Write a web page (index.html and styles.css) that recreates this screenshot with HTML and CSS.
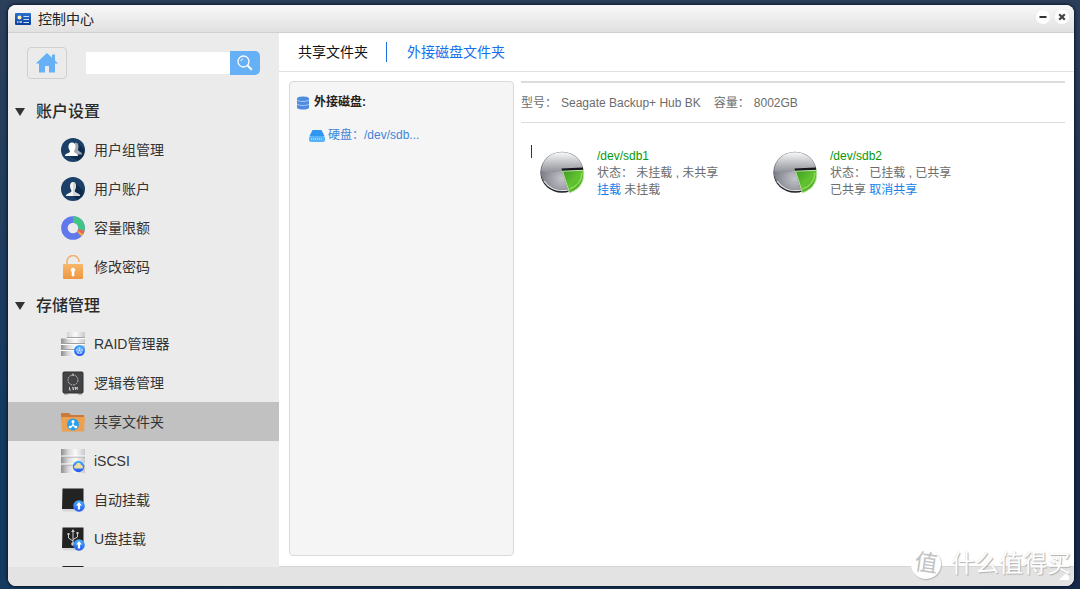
FILE: index.html
```html
<!DOCTYPE html>
<html lang="zh-CN">
<head>
<meta charset="utf-8">
<meta name="viewport" content="width=device-width, initial-scale=1">
<title>控制中心</title>
<link rel="stylesheet" href="styles.css">
</head>
<body>
<svg class="defs" aria-hidden="true">
  <defs>
    <linearGradient id="metal" x1="0" x2="1" y1="0" y2="0"><stop offset="0" stop-color="#8d8d8f"/><stop offset=".3" stop-color="#d9d9db"/><stop offset=".6" stop-color="#fafafa"/><stop offset="1" stop-color="#c9c9cb"/></linearGradient>
    <linearGradient id="blue" x1="0" x2="0" y1="0" y2="1"><stop offset="0" stop-color="#45b0fb"/><stop offset="1" stop-color="#2458f0"/></linearGradient>
    <linearGradient id="lock" x1="0" x2="0" y1="0" y2="1"><stop offset="0" stop-color="#f7b768"/><stop offset="1" stop-color="#ef9640"/></linearGradient>
    <linearGradient id="card" x1="0" x2="0" y1="0" y2="1"><stop offset="0" stop-color="#2c70cf"/><stop offset="1" stop-color="#0b3d9a"/></linearGradient>
    <linearGradient id="pie-top" x1="0" x2="0" y1="0" y2="1"><stop offset="0" stop-color="#fafafb"/><stop offset=".5" stop-color="#c3c4c8"/><stop offset="1" stop-color="#8f9198"/></linearGradient>
    <radialGradient id="pie-base" cx=".5" cy=".7" r=".55"><stop offset="0" stop-color="#c4c5cb"/><stop offset="1" stop-color="#777983"/></radialGradient>
    <linearGradient id="pie-green" x1="0" x2="1" y1="0" y2="1"><stop offset="0" stop-color="#3d9a20"/><stop offset=".5" stop-color="#62c331"/><stop offset="1" stop-color="#3f9f1b"/></linearGradient>
    <symbol id="up-badge" viewBox="0 0 12 12"><circle cx="6" cy="6" r="5.8" fill="url(#blue)"/><path d="M6 2 9 5.500H7.100V9.600H4.900V5.500H3z" fill="#fff"/></symbol>
    <symbol id="disk-pie" viewBox="0 0 46 44">
      <ellipse cx="22" cy="22" rx="21.500" ry="19.800" fill="#24252b"/>
      <ellipse cx="22" cy="20.500" rx="21.500" ry="19.800" fill="#777980"/>
      <ellipse cx="22" cy="20" rx="20.600" ry="18.800" fill="url(#pie-base)"/>
      <path d="M1.500 20C2 8 11 1.200 22 1.200S41 8 42.500 17L22 19.500Q11 23 1.500 20z" fill="url(#pie-top)"/>
      <path d="M4 30Q11 39.500 22 39.500 26 39.500 28 39" fill="none" stroke="#e4e5e8" stroke-width="1.200"/>
      <path d="M22 18 28 38" stroke="#5f6169"/>
      <path d="M21.500 17.500 43 16.500V19.500L22.500 20.500z" fill="#15161b"/>
      <path d="M22.500 20.200 43.500 19.300C44.500 29 42 37 29.500 42z" fill="url(#pie-green)" stroke="#bfe6a8"/>
      <path d="M29.500 38Q41 34 42 22" fill="none" stroke="#8fdb58" stroke-width="1.500"/>
    </symbol>
  </defs>
</svg>

<div class="window">
  <header class="titlebar">
    <svg class="title-icon" viewBox="0 0 16 12"><rect width="16" height="12" rx="1" fill="url(#card)"/><circle cx="4.500" cy="4.500" r="2" fill="#fff4b0"/><path d="M2 9h1.500M4.500 9H7" stroke="#cfe1fb" stroke-width="1.500"/><path d="M8.500 3.500H14M8.500 6.500H14M8.500 9.500H14" stroke="#c9dcf8"/></svg>
    <h1 class="title">控制中心</h1>
    <div class="window-actions">
      <button class="round" type="button" aria-label="最小化"><svg viewBox="0 0 14 14"><path d="M3.500 7h7" stroke="#333" stroke-width="2"/></svg></button>
      <button class="round" type="button" aria-label="关闭"><svg viewBox="0 0 14 14"><path d="m4.200 4.200 5.600 5.600m0-5.600L4.200 9.800" stroke="#444" stroke-width="2.200"/></svg></button>
    </div>
  </header>

  <div class="body">
    <aside class="sidebar">
      <form class="tools">
        <button class="home" type="button" aria-label="主页"><svg viewBox="0 0 24 22"><path d="M12 1 .8 11.600H4V20.500h6V14h4v6.500h6v-8.900h3.200L20 8.500V2.500h-3V5.800z" fill="#66b0f5"/></svg></button>
        <div class="search">
          <input class="search-box" type="text" aria-label="搜索">
          <button class="search-button" type="submit" aria-label="搜索"><svg viewBox="0 0 18 18" fill="none" stroke="#fff"><circle cx="7.500" cy="7.500" r="5.500" stroke-width="1.300"/><path d="M4.800 7A3 3 0 0 1 7 4.800"/><path d="m11.800 11.800 4 4" stroke-width="2"/></svg></button>
        </div>
      </form>
      <nav class="menu" aria-label="设置">
        <h2 class="group">账户设置</h2>
        <a class="item" href="#"><svg viewBox="0 0 24 24"><circle cx="12" cy="12" r="12" fill="#1b4168"/><path d="m18 6 5.500 6A11.800 11.800 0 0 1 17 22.500L8 18z" fill="#0f2c4c"/><path d="M14 4.500c4 0 4 4 3 7 0 2 4 2 4 5H12z" fill="#a3a8b0"/><path d="M4 18c0-3 5-2.500 5-5-2.200-3-2.400-8.500 2-8.500s4.200 5.500 2 8.500c0 2.500 4 2 4 5z" fill="#fff"/></svg>用户组管理</a>
        <a class="item" href="#"><svg viewBox="0 0 24 24"><circle cx="12" cy="12" r="12" fill="#1b4168"/><path d="m14 5.500 9 9A11.800 11.800 0 0 1 16 23l-5-5z" fill="#0f2c4c"/><path d="M5 19c0-3 5.500-2.500 5.500-5.500-2.200-3-2-8.500 1.500-8.500s3.700 5.500 1.500 8.500c0 3 5.500 2.500 5.500 5.500z" fill="#f4f4f4"/><path d="M12 5c3.500 0 3.700 5.500 1.500 8.500 0 3 5.500 2.500 5.500 5.500H12z" fill="#d3d6da"/></svg>用户账户</a>
        <a class="item" href="#"><svg viewBox="0 0 24 24" fill="none" stroke-width="6.500"><circle cx="12" cy="12" r="8.600" stroke="#5f78ec"/><path d="M12 3.400A8.600 8.600 0 0 1 20.400 14" stroke="#42c583"/><path d="M20.400 14a8.600 8.600 0 0 1-1 2.600" stroke="#f2664b"/><path d="M19.400 16.600a8.600 8.600 0 0 1-1.200 1.500" stroke="#f5a63e"/></svg>容量限额</a>
        <a class="item" href="#"><svg viewBox="0 0 24 24"><path d="M6 10V6.500a6 6 0 0 1 12 0V7" fill="none" stroke="#f3b06c" stroke-width="1.600"/><rect x="2" y="9" width="20" height="15" rx="1" fill="url(#lock)"/><path d="M12 13a2 2 0 0 1 1 3.700V21h-2v-4.300A2 2 0 0 1 12 13z" fill="#fff" stroke="#fff" stroke-width=".6"/></svg>修改密码</a>
        <h2 class="group">存储管理</h2>
        <a class="item" href="#"><svg viewBox="0 0 24 24"><path d="M6 0h18v6H6zM0 6.500h24V12H0zM0 12.500h24V18H0zM0 18.500h22V24H0z" fill="url(#metal)"/><path d="M6 5.500h18M0 11.500h24M0 17.500h22" stroke="#a0a0a3"/><path d="M6 6.500h18M0 12.500h24M0 18.500h22" stroke="#fff"/><circle cx="18.500" cy="18.500" r="5.500" fill="url(#blue)"/><path d="m18.500 15.500 3 2.200-1.200 3.500h-3.600l-1.200-3.500zM18.500 18.500v-3m0 3 3-.8m-3 .8 1.800 2.700m-1.800-2.700-1.800 2.700m1.800-2.700-3-.8" stroke="#d9ebff" stroke-width=".8" fill="none"/></svg>RAID管理器</a>
        <a class="item" href="#"><svg viewBox="0 0 24 24"><path d="M3 22h4v2H3zM17 22h4v2h-4z" fill="#bbb"/><rect x="2" y="1" width="20" height="21" rx="1" fill="#444446" stroke="#303032"/><circle cx="12" cy="9" r="5" fill="none" stroke="#b9b9bb" stroke-dasharray="2 .8"/><path d="M12 2.500V5" stroke="#ddd"/><path d="M8.500 16v3H10m1.500-3 .8 3 .8-3m1.400 3v-3l.9 1.500.9-1.500v3" fill="none" stroke="#ddd" stroke-width=".8"/></svg>逻辑卷管理</a>
        <a class="item current" href="#" aria-current="page"><svg viewBox="0 0 24 24"><path d="M0 3h8l2 2h13v5H0z" fill="#cc7a3b"/><path d="M0 7h24l-1 14.500H1z" fill="#eba052"/><circle cx="12" cy="14.500" r="6" fill="#2ba1ee"/><path d="M12 11v4l-3 3m3-3 3 3" fill="none" stroke="#fff" stroke-width="1.300"/><circle cx="12" cy="11.500" r="1.500" fill="#fff"/><circle cx="9" cy="17" r="1.300" fill="#fff"/><circle cx="15" cy="17" r="1.300" fill="#fff"/></svg>共享文件夹</a>
        <a class="item" href="#"><svg viewBox="0 0 24 24"><path d="M0 0h24v24H0z" fill="url(#metal)"/><path d="M0 8h24M0 16h24" stroke="#a5a5a8"/><path d="M0 7h24M0 15h24" stroke="#fff"/><circle cx="17.500" cy="17.500" r="5.700" fill="url(#blue)"/><path d="M13.500 19.500c-1-2 .5-3.500 1.500-3.500.5-3 4.500-3 5 0 1.500 0 2.500 2 1.500 3.500z" fill="#f3dda0"/></svg>iSCSI</a>
        <a class="item" href="#"><svg viewBox="0 0 24 24"><path d="M1 20h21l-1 3.500H2z" fill="#d8d8d8"/><path d="M1.500.5h21V21H1z" fill="#232324"/><use href="#up-badge" x="12" y="12" width="12" height="12"/></svg>自动挂载</a>
        <a class="item" href="#"><svg viewBox="0 0 24 24"><path d="M1 20h21l-1 3.500H2z" fill="#d8d8d8"/><path d="M1.500.5h21V21H1z" fill="#232324"/><path d="M12 17V4M12 14 7.500 11V7M12 12.500 16.500 10V6" fill="none" stroke="#d0d0d0"/><path d="m12 2 1.800 3h-3.600zM6.500 6h2v2h-2zM15.500 5h2v2h-2z" fill="#d0d0d0"/><circle cx="12" cy="17" r="1.800" fill="#d0d0d0"/><use href="#up-badge" x="12" y="12" width="12" height="12"/></svg>U盘挂载</a>
        <a class="item" href="#" aria-label="更多"><svg viewBox="0 0 24 24"><path d="M1.500 0h21v21h-21z" fill="#232324"/></svg></a>
      </nav>
    </aside>

    <main class="content">
      <nav class="tabs" aria-label="文件夹">
        <a class="tab" href="#">共享文件夹</a>
        <a class="tab active" href="#" aria-current="page">外接磁盘文件夹</a>
      </nav>
      <div class="panes">
        <section class="tree">
          <h3 class="tree-title"><svg viewBox="0 0 12 14"><path d="M0 2.500C0-.3 12-.3 12 2.500v9c0 2.800-12 2.800-12 0z" fill="#4f8ce0"/><path d="M0 4c2 2 10 2 12 0M0 8c2 2 10 2 12 0" fill="none" stroke="#a7c8f4"/></svg>外接磁盘:</h3>
          <a class="tree-link" href="#"><svg viewBox="0 0 16 12"><path d="M3.500 0h9L15.500 6H.5z" fill="#2f97f0"/><rect y="6" width="16" height="6" rx="2" fill="#58b2fa"/><path d="M2 9h12" stroke="#d8ecff" stroke-dasharray="1 1"/></svg>硬盘：/dev/sdb...</a>
        </section>
        <section class="detail">
          <dl class="facts">
            <div class="fact"><dt>型号：</dt><dd>Seagate Backup+ Hub BK</dd></div>
            <div class="fact"><dt>容量：</dt><dd>8002GB</dd></div>
          </dl>
          <div class="disks">
            <span class="caret"></span>
            <article class="disk">
              <svg class="pie"><use href="#disk-pie"/></svg>
              <div>
                <h4 class="disk-name">/dev/sdb1</h4>
                <p>状态： 未挂载 , 未共享</p>
                <p><a href="#">挂载</a> 未挂载</p>
              </div>
            </article>
            <article class="disk">
              <svg class="pie"><use href="#disk-pie"/></svg>
              <div>
                <h4 class="disk-name">/dev/sdb2</h4>
                <p>状态： 已挂载 , 已共享</p>
                <p>已共享 <a href="#">取消共享</a></p>
              </div>
            </article>
          </div>
        </section>
      </div>
    </main>
  </div>
  <footer class="statusbar"><svg class="grip" viewBox="0 0 10 10"><path d="M10 0v10H0z" fill="#fff"/></svg></footer>
</div>
<div class="watermark"><span class="seal">值</span><span>什么值得买</span></div>
</body>
</html>
```
FILE: styles.css
```css
* { box-sizing: border-box; }

body {
  margin: 0;
  height: 100vh;
  padding: 5px 6px 3px 8px;
  overflow: hidden;
  background: linear-gradient(#2b3f5a, rgba(43, 63, 90, 0) 70%), linear-gradient(90deg, #143a60, #16294a);
  color: #333;
  font: 14px/20px "Liberation Sans", "Noto Sans CJK SC", sans-serif;
}

h1, h2, h3, h4, p, dl, dd { margin: 0; font-weight: 400; }
a { color: inherit; text-decoration: none; }
button { padding: 0; border: 0; background: none; }
svg { display: block; flex: none; }
.defs { position: absolute; width: 0; height: 0; }

.window {
  display: flex;
  flex-direction: column;
  height: 100%;
  overflow: hidden;
  border-radius: 8px;
  background: #ebebeb;
  box-shadow: 0 0 3px 1px #0c1727;
}

.titlebar {
  display: flex;
  align-items: center;
  flex: none;
  height: 28px;
  padding: 0 5px 0 7px;
  border-bottom: 1px solid #cfcfcf;
  background: linear-gradient(#f8f8f8, #e1e1e1);
}
.title-icon { width: 16px; height: 12px; margin-right: 7px; }
.title { flex: 1; color: #222; font-size: 14px; }
.window-actions { display: flex; gap: 5px; align-self: flex-start; padding-top: 5px; }
.round { width: 14px; height: 14px; border-radius: 50%; background: #fff; }

.body { display: flex; flex: 1; min-height: 0; }

.sidebar { flex: none; width: 271px; overflow: hidden; }
.tools { display: flex; align-items: center; gap: 19px; padding: 14px 19px 13px; }
.home {
  display: grid;
  place-items: center;
  width: 40px;
  height: 32px;
  border: 1px solid #cfcfcf;
  border-radius: 4px;
}
.home svg { width: 24px; height: 22px; }
.search { display: flex; align-items: center; flex: 1; min-width: 0; }
.search-box { flex: 1; min-width: 0; height: 22px; padding: 0 6px; border: 0; background: #fff; font: inherit; }
.search-button {
  display: grid;
  place-items: center;
  width: 30px;
  height: 24px;
  border-radius: 0 5px 5px 0;
  background: #66b1f6;
}
.search-button svg { width: 18px; height: 18px; }

.group {
  display: flex;
  align-items: center;
  gap: 11px;
  height: 38px;
  padding: 2px 0 0 7px;
  color: #2a2a2a;
  font-size: 16px;
  font-weight: 500;
}
.group::before {
  content: "";
  border: 5px solid transparent;
  border-top: 8px solid #333;
  border-bottom: 0;
}
.item { display: flex; align-items: center; gap: 9px; height: 39px; padding-left: 53px; }
.item svg { width: 24px; height: 24px; }
.item.current { background: #c1c1c1; }

.content { display: flex; flex-direction: column; flex: 1; min-width: 0; background: #fff; border-bottom: 1px solid #d6d6d6; }
.tabs { display: flex; align-items: center; height: 39px; padding-left: 19px; border-bottom: 1px solid #e0e0e0; }
.tab { color: #111; }
.tab.active { margin-left: 18px; padding-left: 20px; border-left: 1px solid #1a6fe0; color: #1470ec; }

.panes { display: flex; flex: 1; gap: 7px; padding: 9px 9px 10px 10px; font-size: 12px; line-height: 17px; }
.tree {
  flex: none;
  width: 225px;
  padding: 12px 7px;
  border: 1px solid #d9d9d9;
  border-radius: 4px;
  background: #f5f5f5;
}
.tree-title { display: flex; align-items: center; gap: 5px; color: #222; font-size: 12px; font-weight: 700; }
.tree-title svg { width: 12px; height: 14px; }
.tree-link { display: flex; align-items: center; gap: 3px; margin-top: 16px; padding-left: 12px; color: #4285d8; }
.tree-link svg { width: 16px; height: 12px; }

.detail { flex: 1; min-width: 0; color: #6c6c6c; }
.facts { display: flex; gap: 13px; padding: 12px 0 10px; border-top: 2px solid #dcdcdc; border-bottom: 1px solid #dcdcdc; }
.fact { display: flex; gap: 4px; }
.disks { display: flex; padding: 22px 0 0 10px; }
.caret { width: 1px; height: 13px; margin-right: 8px; background: #333; }
.disk { display: flex; gap: 11px; width: 233px; padding-top: 3px; }
.disk a { color: #147ee8; }
.pie { width: 46px; height: 44px; margin-top: 3px; }
.disk-name { color: #089808; font-size: 12px; }

.statusbar { display: flex; justify-content: flex-end; align-items: flex-end; flex: none; height: 19px; padding: 0 5px 6px; background: #e3e3e3; }
.grip { width: 10px; height: 10px; }

.watermark {
  position: absolute;
  right: 9px;
  bottom: 9px;
  display: flex;
  align-items: center;
  gap: 10px;
  color: #fff;
  font-size: 24px;
  line-height: 32px;
  text-shadow: 1px 1px 1px #b0b0b0, 0 0 1px #d0d0d0;
  pointer-events: none;
}
.seal {
  width: 30px;
  height: 30px;
  border-radius: 50%;
  background: #fff;
  box-shadow: 1px 1px 1px #bbb;
  color: #c2c2c2;
  font-size: 23px;
  line-height: 28px;
  text-align: center;
  text-shadow: none;
  transform: rotate(8deg);
}
```
